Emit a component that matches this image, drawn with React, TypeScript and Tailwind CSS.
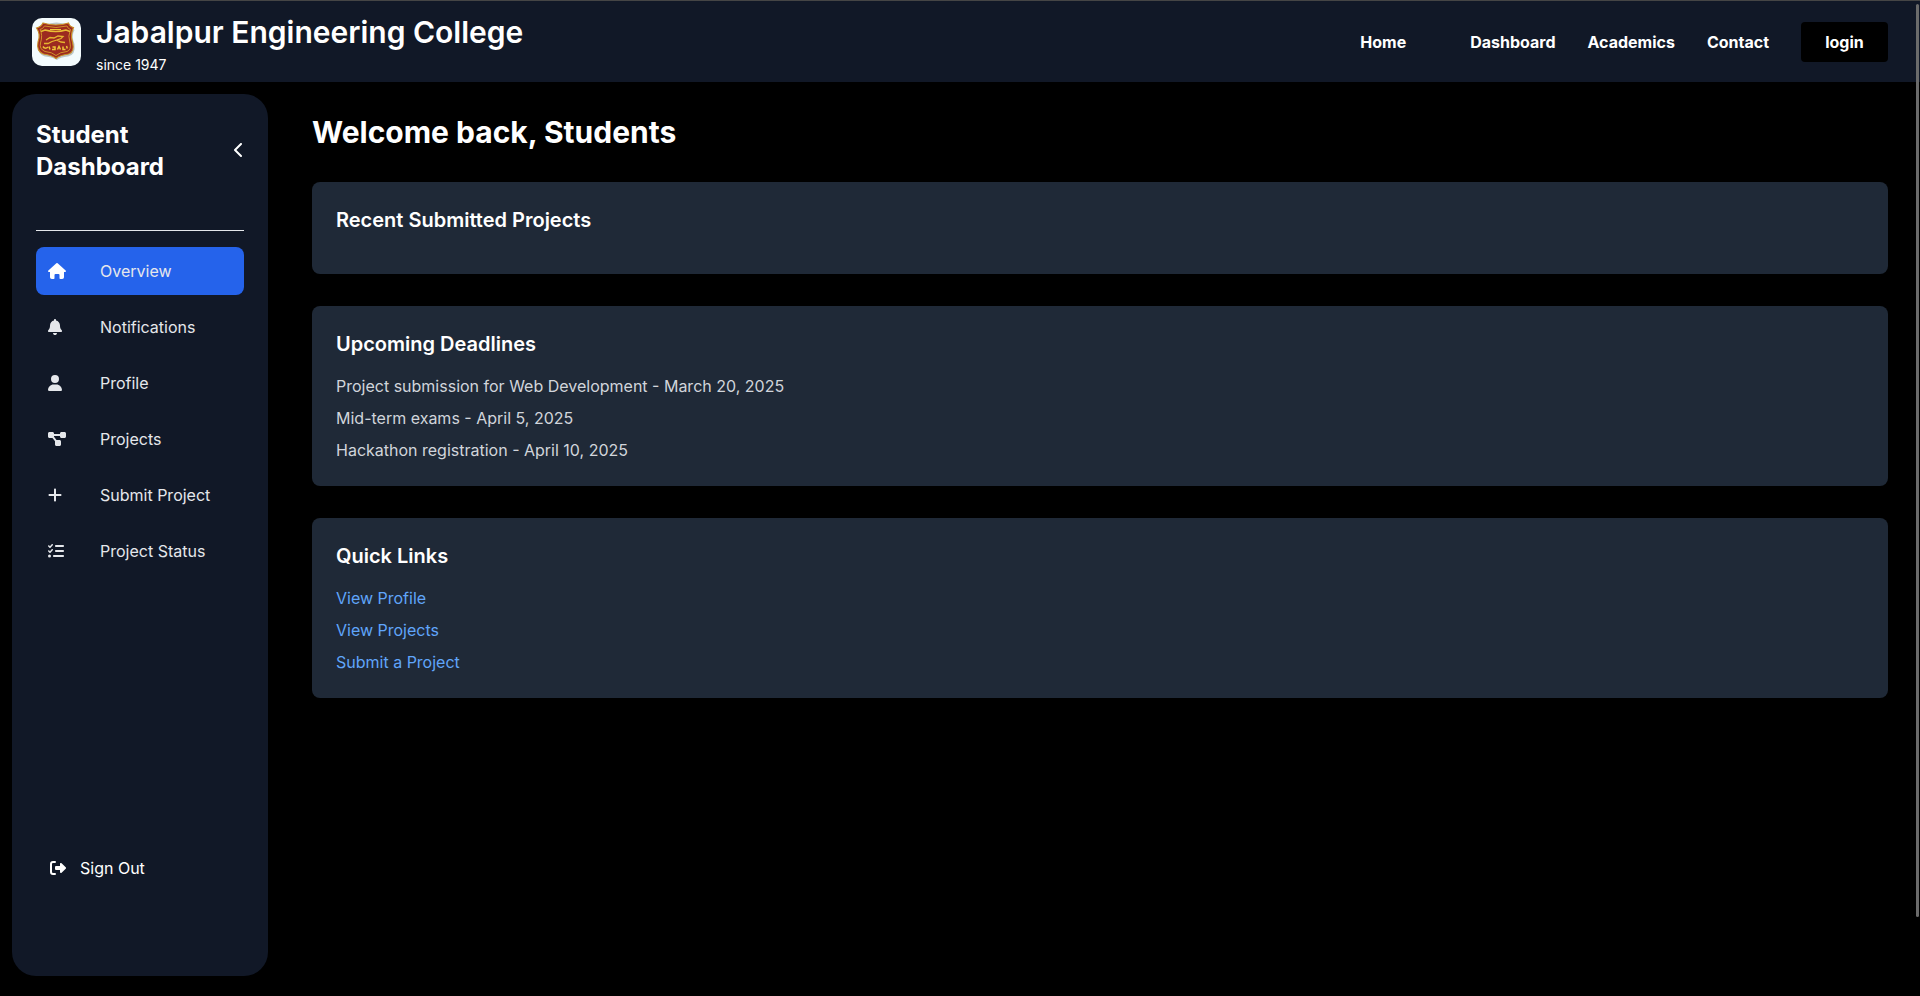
import React from "react";
import {
  FaBell,
  FaUser,
  FaDiagramProject,
  FaPlus,
  FaListCheck,
  FaChevronLeft,
} from "react-icons/fa6";

function HouseIcon() {
  return (
    <svg viewBox="0 0 18 16" className="h-4 w-[18px]" fill="currentColor">
      <path d="M8.35.3a1 1 0 0 1 1.3 0l8 7.1a.95.95 0 0 1-.65 1.6h-1v5.2a1.8 1.8 0 0 1-1.8 1.8H12.3a.8.8 0 0 1-.8-.8V12a1 1 0 0 0-1-1h-3a1 1 0 0 0-1 1v3.2a.8.8 0 0 1-.8.8H3.8A1.8 1.8 0 0 1 2 14.2V9H1a.95.95 0 0 1-.65-1.6z" />
    </svg>
  );
}

function SignOutIcon() {
  return (
    <svg viewBox="0 0 16 16" className="h-4 w-4" fill="currentColor">
      <path d="M5 1a1 1 0 0 1 0 2H3a1 1 0 0 0-1 1v8a1 1 0 0 0 1 1h2a1 1 0 0 1 0 2H3a3 3 0 0 1-3-3V4a3 3 0 0 1 3-3z" />
      <path d="M15.7 7.3a1 1 0 0 1 0 1.4l-4.1 4.1a.95.95 0 0 1-1.6-.7V10H6a1 1 0 0 1-1-1V7a1 1 0 0 1 1-1h4V3.900a.95.95 0 0 1 1.600-.7z" />
    </svg>
  );
}

function Crest() {
  return (
    <svg viewBox="0 0 49 48" className="h-12 w-[49px] shrink-0 rounded-[10px] bg-[#f3fbfd]" fill="none">
      <path d="M12 7 Q24.500 2 37 7 L42.500 12 Q39 18 42.500 26 Q44 37 36 38.500 Q28 39 25 42 Q21 39 13 38.500 Q5 36 6 27 Q9 18 6 12Z" fill="#9aa5a4" opacity=".6" />
      <path d="M11 5 Q24 9 36.500 5 Q38 9 41.500 9.500 Q38 17 40.500 24 Q43 34 36.500 36 Q28 37 24 40.500 Q20 37 11.500 36 Q4 33 6 24 Q9 16 4.500 10 Q9 9 11 5Z" fill="#9c2a20" stroke="#c98d24" strokeWidth="1.100" />
      <path d="M12.500 8 Q24 11 35 8 Q36 11 38.500 11.500 Q35.500 18 38 25 Q39.500 32 35 33.500 Q28 34 24 37.500 Q20 34 13 33.500 Q7 31 8.500 25 Q11 17 8 11.500 Q11 11 12.500 8Z" stroke="#d69d2b" strokeWidth=".9" />
      <path d="M9 13.500 L13 12 Q24 15 34 12 L38 13.500" stroke="#e9bd35" strokeWidth="1.500" />
      <path d="M18 11.500h11" stroke="#f0c63d" strokeWidth="1.200" />
      <path d="M14 22 L18 19.500 L22 20 L26 18 L31 18.500 L29 20.500 L25 22 L29 24 L33 24.500 M25 22 L20 23.500 L16 25.500 L12 25.500" stroke="#e6b52f" strokeWidth="1.300" />
      <path d="M11 28.500 Q13 31.500 16 29 M17 28.500 L18 31.500 M20.500 29 h2.500 v2.500 h-3 M25.500 31.500 l1.500-3 1.500 3 M31 28.500 v3 h2.500 M34.500 28 l.8 2.500" stroke="#f0c637" strokeWidth="1.500" />
    </svg>
  );
}

const menu = [
  { label: "Overview", icon: <HouseIcon />, active: true },
  { label: "Notifications", icon: <FaBell className="h-4 w-3.5" /> },
  { label: "Profile", icon: <FaUser className="h-4 w-3.5" /> },
  { label: "Projects", icon: <FaDiagramProject className="h-4 w-[18px]" /> },
  { label: "Submit Project", icon: <FaPlus className="h-4 w-3.5" /> },
  { label: "Project Status", icon: <FaListCheck className="h-4 w-4" /> },
];

const deadlines = [
  "Project submission for Web Development - March 20, 2025",
  "Mid-term exams - April 5, 2025",
  "Hackathon registration - April 10, 2025",
];

const links = ["View Profile", "View Projects", "Submit a Project"];

function Header() {
  return (
    <header className="flex h-[82px] items-start justify-between border-t border-[#454545] bg-[#111827] pr-8 pl-8">
      <div className="flex pt-[17px]">
        <Crest />
        <div className="-mt-1 ml-[15px]">
          <h1 className="text-3xl leading-9 font-semibold">Jabalpur Engineering College</h1>
          <p className="mt-[5px] text-sm leading-5">since 1947</p>
        </div>
      </div>
      <nav className="flex items-center gap-8 pt-[21px] font-bold">
        <a className="mr-8">Home</a>
        <a>Dashboard</a>
        <a>Academics</a>
        <a>Contact</a>
        <button className="h-10 w-[87px] rounded bg-black font-bold">login</button>
      </nav>
    </header>
  );
}

function Sidebar() {
  return (
    <aside className="mt-3 ml-3 flex h-[882px] w-64 shrink-0 flex-col rounded-3xl bg-[#111827] px-6 pt-[25px]">
      <div className="flex items-center justify-between">
        <h2 className="w-40 text-2xl leading-8 font-bold">Student Dashboard</h2>
        <FaChevronLeft className="-mt-0.5 h-4 w-2.5" />
      </div>
      <div className="mt-[47px] border-t border-[#e5e7eb]" />
      <ul className="mt-4 flex flex-col gap-2">
        {menu.map((m) => (
          <li
            key={m.label}
            className={
              m.active
                ? "flex h-12 items-center rounded-lg bg-[#2563eb] px-3 text-[#e5e7eb]"
                : "flex h-12 items-center rounded-lg px-3 text-[#e5e7eb]"
            }
          >
            <span className={m.active ? "w-[52px] text-white" : "w-[52px]"}>{m.icon}</span>
            <span>{m.label}</span>
          </li>
        ))}
      </ul>
      <button className="mt-auto mb-[84px] flex h-12 items-center gap-3.5 pl-3.5 text-left">
        <SignOutIcon />
        <span>Sign Out</span>
      </button>
    </aside>
  );
}

function Card({ title, children }: { title: string; children?: React.ReactNode }) {
  return (
    <section className="rounded-lg bg-[#1f2937] p-6">
      <h3 className="mb-4 text-xl leading-7 font-semibold">{title}</h3>
      {children}
    </section>
  );
}

export default function App() {
  return (
    <div className="h-[996px] overflow-hidden bg-black font-['Inter',sans-serif] text-base text-white">
      <Header />
      <div className="flex">
        <Sidebar />
        <main className="flex flex-1 flex-col gap-8 pt-8 pr-8 pl-11">
          <h1 className="text-3xl leading-9 font-bold">Welcome back, Students</h1>
          <Card title="Recent Submitted Projects" />
          <Card title="Upcoming Deadlines">
            <ul className="space-y-2 text-[#d1d5db]">
              {deadlines.map((d) => (
                <li key={d}>{d}</li>
              ))}
            </ul>
          </Card>
          <Card title="Quick Links">
            <ul className="space-y-2 text-[#60a5fa]">
              {links.map((l) => (
                <li key={l}>
                  <a>{l}</a>
                </li>
              ))}
            </ul>
          </Card>
        </main>
      </div>
      <div className="absolute top-1 right-px h-[913px] w-[3px] rounded-full bg-[#6b6b6b]" />
    </div>
  );
}
